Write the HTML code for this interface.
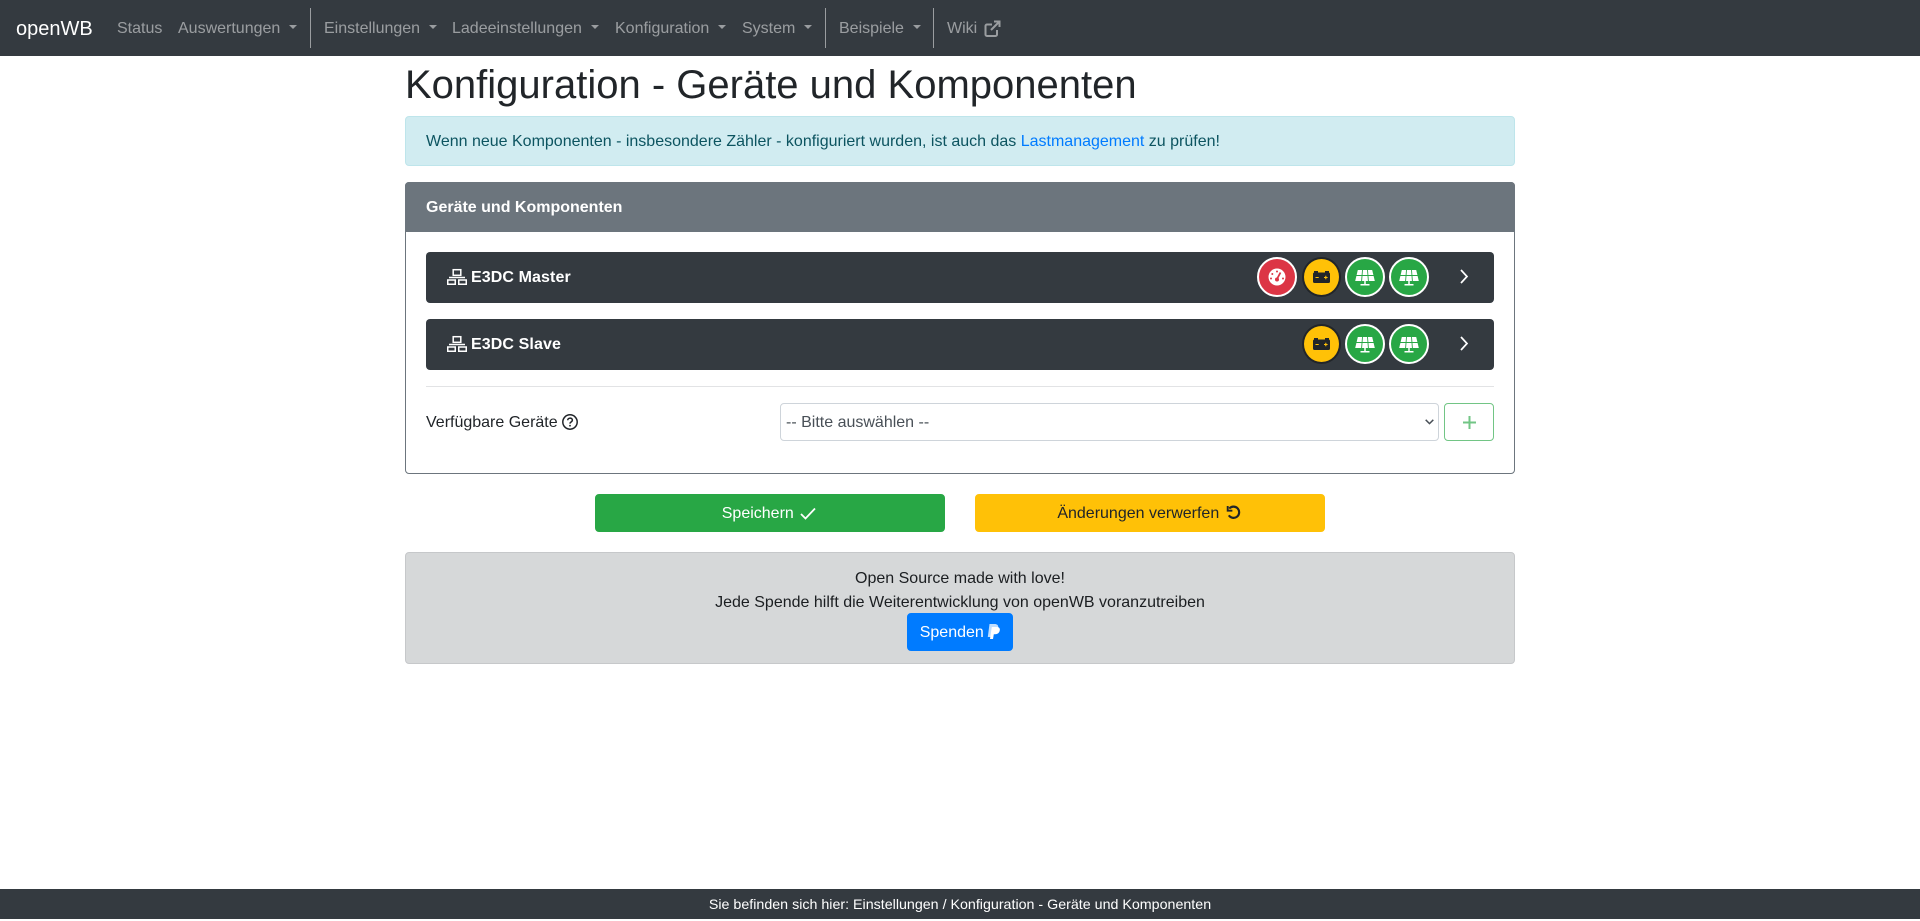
<!DOCTYPE html>
<html lang="de"><head><meta charset="utf-8"><title>openWB</title>
<style>
*{box-sizing:border-box}
html,body{margin:0;padding:0;width:1920px;height:919px;overflow:hidden;background:#fff;font-family:"Liberation Sans",sans-serif;font-size:16px;color:#212529;line-height:24px}
.a{position:absolute;white-space:nowrap}
nav{position:absolute;left:0;top:0;width:1920px;height:56px;background:#343a40}
.n{position:absolute;top:17px;color:rgba(255,255,255,.5);white-space:nowrap}
.n.d::after{content:"";display:inline-block;margin-left:9px;vertical-align:4px;border-top:4px solid;border-left:4px solid transparent;border-right:4px solid transparent}
.s{position:absolute;top:8px;height:40px;width:1px;background:rgba(255,255,255,.5)}
.btn{position:absolute;border-radius:4px;text-align:center;line-height:38px;height:38px;white-space:nowrap}
.it{position:absolute;left:426px;width:1068px;height:51px;background:#343a40;border-radius:4px}
.it b{position:absolute;left:45px;top:14px;color:#fff;font-weight:700;letter-spacing:.1px}
.c{position:absolute;width:40px;height:40px;border-radius:50%;top:5px}
.c svg{position:absolute;left:-2px;top:-2px}
.r{background:#dc3545;border:2px solid #fff}.y{background:#ffc107;border:2px solid #212529}.g{background:#28a745;border:2px solid #fff}
svg{display:block;overflow:visible}
</style></head><body>
<nav>
<div class="a" style="left:16px;top:16px;font-size:20px;line-height:26px;color:#fff">openWB</div>
<div class="n" style="left:117px">Status</div>
<div class="n d" style="left:178px">Auswertungen</div>
<div class="s" style="left:310px"></div>
<div class="n d" style="left:324px">Einstellungen</div>
<div class="n d" style="left:452px">Ladeeinstellungen</div>
<div class="n d" style="left:615px">Konfiguration</div>
<div class="n d" style="left:742px">System</div>
<div class="s" style="left:825px"></div>
<div class="n d" style="left:839px">Beispiele</div>
<div class="s" style="left:933px"></div>
<div class="n" style="left:947px">Wiki</div>
<svg class="a" style="left:983px;top:20px" width="18" height="17" viewBox="0 0 18 17" fill="none" stroke="rgba(255,255,255,.5)" stroke-width="2"><path d="M14 10V14.500a1.500 1.500 0 0 1-1.500 1.500H4A1.500 1.500 0 0 1 2.500 14.500V6A1.500 1.500 0 0 1 4 4.500h5"/><path d="M11 1.500h5.500V7M16 2l-8 8"/></svg>
</nav>

<h1 class="a" style="left:405px;top:61px;margin:0;font-size:40px;line-height:48px;font-weight:500;color:#212529">Konfiguration - Geräte und Komponenten</h1>

<div class="a" style="left:405px;top:116px;width:1110px;height:50px;background:#d1ecf1;border:1px solid #bee5eb;border-radius:4px;color:#0c5460;padding:13px 20px">Wenn neue Komponenten - insbesondere Zähler - konfiguriert wurden, ist auch das <span style="color:#007bff">Lastmanagement</span> zu prüfen!</div>

<div class="a" style="left:405px;top:182px;width:1110px;height:292px;border:1px solid #6c757d;border-radius:4px"></div>
<div class="a" style="left:405px;top:182px;width:1110px;height:50px;background:#6c757d;border-radius:4px 4px 0 0;color:#fff;font-weight:700;padding:14px 21px">Geräte und Komponenten</div>

<div class="it" style="top:252px">
<svg class="a" style="left:21px;top:17px" width="20" height="16" viewBox="0 0 20 16" fill="none" stroke="#fff" stroke-width="1.500"><rect x="6.200" y=".7" width="7.600" height="5.600"/><rect x=".75" y="11" width="7.500" height="4.250"/><rect x="11.750" y="11" width="7.500" height="4.250"/><path d="M2 8.500H18"/></svg>
<b>E3DC Master</b>
<div class="c r" style="left:831px"><svg width="40" height="40" viewBox="0 0 40 40"><circle cx="20" cy="20" r="8.500" fill="#fff"/><path d="M20 22l3.500-6.500" stroke="#dc3545" stroke-width="1.800"/><circle cx="20" cy="22.500" r="2" fill="#dc3545"/><circle cx="20" cy="14.500" r="1" fill="#dc3545"/><circle cx="15.300" cy="17" r="1" fill="#dc3545"/><circle cx="14" cy="21.500" r="1" fill="#dc3545"/><circle cx="26" cy="21.500" r="1" fill="#dc3545"/></svg></div>
<div class="c y" style="left:876px;width:39px"><svg width="39" height="40" viewBox="0 0 39 40"><rect x="12" y="14" width="4" height="2.500" fill="#212529"/><rect x="23" y="14" width="4" height="2.500" fill="#212529"/><rect x="11" y="15.500" width="17" height="10.500" rx="1.500" fill="#212529"/><path d="M13.500 20.500h3.200M22 20.500h3.600M23.800 18.700v3.600" stroke="#ffc107" stroke-width="1.100"/></svg></div>
<div class="c g" style="left:919px"><svg width="40" height="40" viewBox="0 0 40 40"><path d="M12.800 13h14.400l2.600 11h-19.600z" fill="#fff"/><path d="M17.500 13l-.9 11M22.500 13l.9 11M11.300 18.500h17.400" stroke="#28a745" stroke-width=".9"/><path d="M20 24v3.500M15.500 27.800h9" stroke="#fff" stroke-width="1.500"/></svg></div>
<div class="c g" style="left:963px"><svg width="40" height="40" viewBox="0 0 40 40"><path d="M12.800 13h14.400l2.600 11h-19.600z" fill="#fff"/><path d="M17.500 13l-.9 11M22.500 13l.9 11M11.300 18.500h17.400" stroke="#28a745" stroke-width=".9"/><path d="M20 24v3.500M15.500 27.800h9" stroke="#fff" stroke-width="1.500"/></svg></div>
<svg class="a" style="left:1034px;top:17px" width="8" height="15" viewBox="0 0 8 15" fill="none" stroke="#fff" stroke-width="1.700"><path d="M1 1l6 6.500-6 6.500"/></svg>
</div>

<div class="it" style="top:319px">
<svg class="a" style="left:21px;top:17px" width="20" height="16" viewBox="0 0 20 16" fill="none" stroke="#fff" stroke-width="1.500"><rect x="6.200" y=".7" width="7.600" height="5.600"/><rect x=".75" y="11" width="7.500" height="4.250"/><rect x="11.750" y="11" width="7.500" height="4.250"/><path d="M2 8.500H18"/></svg>
<b>E3DC Slave</b>
<div class="c y" style="left:876px;width:39px"><svg width="39" height="40" viewBox="0 0 39 40"><rect x="12" y="14" width="4" height="2.500" fill="#212529"/><rect x="23" y="14" width="4" height="2.500" fill="#212529"/><rect x="11" y="15.500" width="17" height="10.500" rx="1.500" fill="#212529"/><path d="M13.500 20.500h3.200M22 20.500h3.600M23.800 18.700v3.600" stroke="#ffc107" stroke-width="1.100"/></svg></div>
<div class="c g" style="left:919px"><svg width="40" height="40" viewBox="0 0 40 40"><path d="M12.800 13h14.400l2.600 11h-19.600z" fill="#fff"/><path d="M17.500 13l-.9 11M22.500 13l.9 11M11.300 18.500h17.400" stroke="#28a745" stroke-width=".9"/><path d="M20 24v3.500M15.500 27.800h9" stroke="#fff" stroke-width="1.500"/></svg></div>
<div class="c g" style="left:963px"><svg width="40" height="40" viewBox="0 0 40 40"><path d="M12.800 13h14.400l2.600 11h-19.600z" fill="#fff"/><path d="M17.500 13l-.9 11M22.500 13l.9 11M11.300 18.500h17.400" stroke="#28a745" stroke-width=".9"/><path d="M20 24v3.500M15.500 27.800h9" stroke="#fff" stroke-width="1.500"/></svg></div>
<svg class="a" style="left:1034px;top:17px" width="8" height="15" viewBox="0 0 8 15" fill="none" stroke="#fff" stroke-width="1.700"><path d="M1 1l6 6.500-6 6.500"/></svg>
</div>

<div class="a" style="left:426px;top:386px;width:1068px;height:1px;background:#e2e3e5"></div>
<div class="a" style="left:426px;top:411px">Verfügbare Geräte</div>
<svg class="a" style="left:562px;top:414px" width="16" height="16" viewBox="0 0 16 16" fill="none" stroke="#212529"><circle cx="8" cy="8" r="7.200" stroke-width="1.500"/><path d="M5.700 6.300c0-1.400 1.100-2.200 2.400-2.200s2.300.8 2.300 2c0 1.800-2.400 1.700-2.400 3.500" stroke-width="1.500"/><circle cx="8" cy="11.700" r=".9" fill="#212529" stroke="none"/></svg>

<div class="a" style="left:780px;top:403px;width:659px;height:38px;border:1px solid #ced4da;border-radius:4px;padding:7px 5px;color:#495057;background:#fff">-- Bitte auswählen --</div>
<svg class="a" style="left:1425px;top:419px" width="9" height="6" viewBox="0 0 9 6" fill="none" stroke="#495057" stroke-width="1.500"><path d="M.7.8l3.800 3.800L8.300.8"/></svg>
<div class="a" style="left:1444px;top:403px;width:50px;height:38px;border:1px solid #28a745;opacity:.65;border-radius:4px"><svg class="a" style="left:17.500px;top:11.500px" width="13" height="13" viewBox="0 0 13 13" stroke="#28a745" stroke-width="2"><path d="M6.500 0v13M0 6.500h13"/></svg></div>

<div class="btn" style="left:595px;top:494px;width:350px;background:#28a745;border:1px solid #28a745;color:#fff;padding-right:2px">Speichern <svg style="display:inline-block;vertical-align:-2px;margin-left:2px" width="16" height="13" viewBox="0 0 16 13" fill="none" stroke="#fff" stroke-width="1.800"><path d="M1 7l4.500 4.500L15 1.500"/></svg></div>
<div class="btn" style="left:975px;top:494px;width:350px;background:#ffc107;border:1px solid #ffc107;color:#212529;padding-right:2px">Änderungen verwerfen <svg style="display:inline-block;vertical-align:-2px;margin-left:2px" width="15" height="15" viewBox="0 0 16 15" fill="none" stroke="#212529" stroke-width="2.300"><path d="M3.500 3.300A6 6 0 1 1 3 10.500"/><path d="M1.800 .5v5h5" stroke-width="2"/></svg></div>

<div class="a" style="left:405px;top:552px;width:1110px;height:112px;background:#d6d8d9;border:1px solid #c6c8ca;border-radius:4px"></div>
<div class="a" style="left:405px;top:567px;width:1110px;text-align:center;color:#1b1e21">Open Source made with love!</div>
<div class="a" style="left:405px;top:591px;width:1110px;text-align:center;color:#1b1e21">Jede Spende hilft die Weiterentwicklung von openWB voranzutreiben</div>
<div class="btn" style="left:907px;top:613px;width:106px;background:#007bff;border:1px solid #007bff;color:#fff">Spenden <svg style="display:inline-block;vertical-align:-2px;margin-left:-1px" width="13" height="15" viewBox="0 0 13 15" fill="#fff"><path d="M2.500 0h5.300C10 0 11.500 1.300 11.200 3.400 10.800 6 9 7.500 6.500 7.500H4.800L3.900 13H0.800z" opacity=".75"/><path d="M4.800 3h5c2 0 3.400 1.100 3 3.300-.4 2.600-2.200 4-4.600 4H6.800L6 15H3z"/></svg></div>

<div class="a" style="left:0;top:889px;width:1920px;height:30px;background:#343a40;color:#fff;text-align:center;font-size:14.25px;line-height:32px">Sie befinden sich hier: Einstellungen / Konfiguration - Geräte und Komponenten</div>
</body></html>
